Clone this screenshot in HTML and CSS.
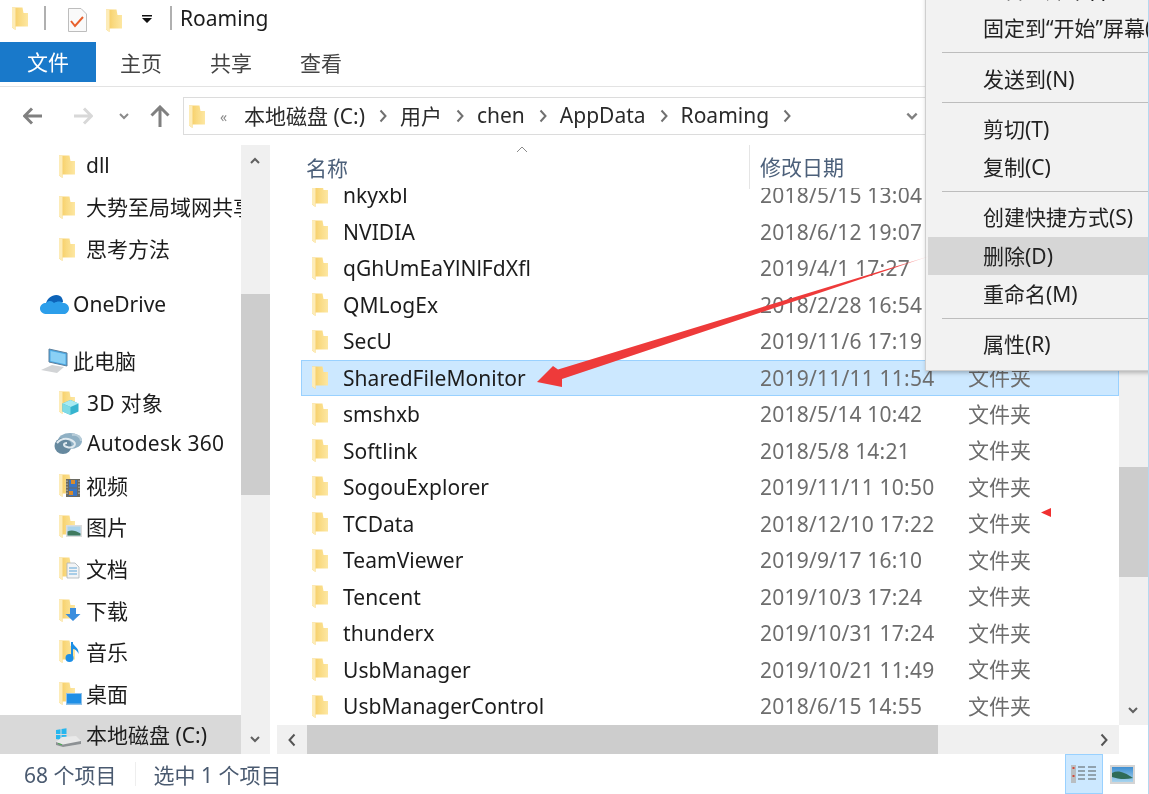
FILE: index.html
```html
<!DOCTYPE html>
<html lang="zh-CN">
<head>
<meta charset="utf-8">
<title>Roaming</title>
<link rel="stylesheet" href="styles.css">
</head>
<body>
<svg class="defs" aria-hidden="true">
  <defs>
    <linearGradient id="fg" x1="0" x2="1" y1="0" y2="0">
      <stop offset="0" stop-color="#f5c95c"/><stop offset=".45" stop-color="#f9d97f"/><stop offset="1" stop-color="#fde7a2"/>
    </linearGradient>
    <linearGradient id="tail" gradientUnits="userSpaceOnUse" x1="930" y1="256" x2="895" y2="267">
      <stop offset="0" stop-color="#f56a6a" stop-opacity=".2"/><stop offset="1" stop-color="#ee3a3a"/>
    </linearGradient>
    <linearGradient id="pic" x1="0" x2="0" y1="0" y2="1">
      <stop offset="0" stop-color="#3f8fd2"/><stop offset="1" stop-color="#a8d4ee"/>
    </linearGradient>
    <symbol id="folder" viewBox="0 0 16 23">
      <path d="M0 .5H10.500L11.500 6H16V19.500H3.500V23L0 20.500Z" fill="url(#fg)"/>
      <path d="M0 .5H3.500V23L0 20.500Z" fill="#fdecb8"/>
    </symbol>
    <symbol id="chev" viewBox="0 0 12 12">
      <path d="M2 4l4 4 4-4" fill="none" stroke="currentColor" stroke-width="2"/>
    </symbol>
  </defs>
</svg>

<div class="window">
  <header class="titlebar">
    <svg class="folder"><use href="#folder"/></svg>
    <span class="tsep first"></span>
    <svg class="docicon" viewBox="0 0 19 24"><path d="M.5.5H13L18.5 6V23.5H.5Z" fill="#fafafa" stroke="#bdbdbd"/><path d="M3 13l4 5 8-9" fill="none" stroke="#e8602c" stroke-width="2"/></svg>
    <svg class="folder second"><use href="#folder"/></svg>
    <svg class="drop" viewBox="0 0 10 10"><path d="M0 1h10v1.500H0zM0 4h10L5 9z" fill="#111"/></svg>
    <span class="tsep last"></span>
    <span class="title">Roaming</span>
  </header>

  <nav class="tabs">
    <span class="tab file">文件</span>
    <span class="tab">主页</span>
    <span class="tab">共享</span>
    <span class="tab">查看</span>
  </nav>

  <div class="addressrow">
    <svg class="navbtn back" viewBox="0 0 20 18"><path d="M1 9h18M9 1.500L1.500 9 9 16.500" fill="none" stroke="currentColor" stroke-width="3"/></svg>
    <svg class="navbtn fwd" viewBox="0 0 20 18"><path d="M1 9h18M11 1.500L18.500 9 11 16.500" fill="none" stroke="currentColor" stroke-width="3"/></svg>
    <svg class="navbtn hist"><use href="#chev"/></svg>
    <svg class="navbtn up" viewBox="0 0 20 22"><path d="M10 22V2M1.500 10.500L10 2l8.500 8.500" fill="none" stroke="currentColor" stroke-width="3"/></svg>
    <div class="addressbox">
      <svg class="folder"><use href="#folder"/></svg>
      <span class="more">«</span>
      <span class="crumb">本地磁盘 (C:)</span><svg class="sepchev" viewBox="0 0 8 14"><path d="M1.500 1.500L6.500 7l-5 5.500" fill="none" stroke="currentColor" stroke-width="2"/></svg>
      <span class="crumb">用户</span><svg class="sepchev" viewBox="0 0 8 14"><path d="M1.500 1.500L6.500 7l-5 5.500" fill="none" stroke="currentColor" stroke-width="2"/></svg>
      <span class="crumb">chen</span><svg class="sepchev" viewBox="0 0 8 14"><path d="M1.500 1.500L6.500 7l-5 5.500" fill="none" stroke="currentColor" stroke-width="2"/></svg>
      <span class="crumb">AppData</span><svg class="sepchev" viewBox="0 0 8 14"><path d="M1.500 1.500L6.500 7l-5 5.500" fill="none" stroke="currentColor" stroke-width="2"/></svg>
      <span class="crumb">Roaming</span><svg class="sepchev" viewBox="0 0 8 14"><path d="M1.500 1.500L6.500 7l-5 5.500" fill="none" stroke="currentColor" stroke-width="2"/></svg>
      <svg class="boxdown"><use href="#chev"/></svg>
    </div>
  </div>

  <div class="body">
    <aside class="nav">
      <div class="navrow"><svg class="navicon" viewBox="0 0 33 24"><use href="#folder" x="5" y="1" width="16" height="23"/></svg><span>dll</span></div>
      <div class="navrow"><svg class="navicon" viewBox="0 0 33 24"><use href="#folder" x="5" y="1" width="16" height="23"/></svg><span>大势至局域网共享</span></div>
      <div class="navrow"><svg class="navicon" viewBox="0 0 33 24"><use href="#folder" x="5" y="1" width="16" height="23"/></svg><span>思考方法</span></div>

      <div class="navrow top section"><svg class="navicon" viewBox="0 0 33 24"><path d="M6 11C7 4 15 0 20 3c2 1 3 4 3 6L10 14Z" fill="#0d63b8"/><path d="M7 21C3 21 0 19 0 15.500 0 12 3 10 6 10c3-3 6-2 8 0 3-2 7-2 9 0 3 0 6 2 6 5.500S26 21 24 21Z" fill="#2c9eea"/></svg><span>OneDrive</span></div>
      <div class="navrow top section"><svg class="navicon" viewBox="0 0 33 24"><path d="M9 0l18 4v13L9 13Z" fill="#4ba9e4" stroke="#5d7f9c"/><path d="M10.500 2l15 3.300v10L10.500 12Z" fill="#8ad0f5"/><path d="M1 21l11-5 12 2-7 6Z" fill="#d2d4d6"/></svg><span>此电脑</span></div>
      <div class="navrow latin"><svg class="navicon" viewBox="0 0 33 24"><use href="#folder" x="5" y="0" width="16" height="23"/><path d="M16.500 9l8 3.500v8l-8 3.500-8-3.500v-8Z" fill="#36b4cf"/><path d="M16.500 9l8 3.500-8 3.500-8-3.500Z" fill="#a9ebf2"/><path d="M8.500 12.500l8 3.500v8l-8-3.500Z" fill="#7fdbe6"/></svg><span>3D 对象</span></div>
      <div class="navrow latin"><svg class="navicon" viewBox="0 0 33 24"><ellipse cx="16" cy="9" rx="12" ry="8" fill="#8fb0c4"/><ellipse cx="9" cy="14" rx="8.500" ry="8" fill="#66899f"/><path d="M3 11c5-6 13-5 17-1 3 3-2 7-7 5-4-1-4-4 0-4" fill="none" stroke="#dfe9ef" stroke-width="2"/><path d="M18 3c5-1 9 2 9 6" fill="none" stroke="#b8cdd9" stroke-width="2"/></svg><span>Autodesk 360</span></div>
      <div class="navrow"><svg class="navicon" viewBox="0 0 33 24"><use href="#folder" x="5" y="0" width="16" height="23"/><rect x="12" y="5" width="14" height="18" fill="#6a6a62"/><rect x="15" y="6" width="8" height="7.500" fill="#3a76c4"/><rect x="15" y="14.500" width="8" height="7.500" fill="#3a76c4"/><path d="M17 6h4v4h-4zM15 17h4v4h-4z" fill="#d98b2c"/><path d="M13 6.500v15M25 6.500v15" stroke="#c8c8c0" stroke-dasharray="1.500 1.500"/></svg><span>视频</span></div>
      <div class="navrow"><svg class="navicon" viewBox="0 0 33 24"><use href="#folder" x="5" y="0" width="16" height="23"/><rect x="12" y="10" width="16" height="12" fill="#dcdcdc"/><rect x="13.500" y="11.500" width="13" height="9" fill="#a8d3ec"/><path d="M13.500 20.500v-4c4-2 8-1 13 2v2Z" fill="#3f7a5f"/></svg><span>图片</span></div>
      <div class="navrow"><svg class="navicon" viewBox="0 0 33 24"><use href="#folder" x="5" y="0" width="16" height="23"/><path d="M13 6h8l4 4v11H13Z" fill="#f2f4f6" stroke="#aab2b8" stroke-width=".8"/><path d="M15 11h8M15 14h8M15 17h8" stroke="#5ea6d8" stroke-width="1.200"/></svg><span>文档</span></div>
      <div class="navrow"><svg class="navicon" viewBox="0 0 33 24"><use href="#folder" x="5" y="0" width="16" height="23"/><path d="M16 9h6v6h4.500l-7.500 7-7.500-7H16Z" fill="#3b8ede"/></svg><span>下载</span></div>
      <div class="navrow"><svg class="navicon" viewBox="0 0 33 24"><use href="#folder" x="5" y="0" width="16" height="23"/><path d="M18 2v15" stroke="#1d8fe6" stroke-width="2"/><ellipse cx="15.500" cy="18" rx="4" ry="4" fill="#1d8fe6"/><path d="M18.500 2c0 4 7 5 6 12-1-3-3-5-6-5Z" fill="#1d8fe6"/></svg><span>音乐</span></div>
      <div class="navrow"><svg class="navicon" viewBox="0 0 33 24"><use href="#folder" x="5" y="0" width="16" height="23"/><rect x="12" y="11" width="16" height="12" fill="#8fc0e8"/><rect x="13" y="12" width="14" height="9.500" fill="#1f8fe6"/></svg><span>桌面</span></div>
      <div class="navrow active"><svg class="navicon" viewBox="0 0 33 24"><path d="M2 7l4.500-.8V11H2ZM7.500 6l5-.8V11h-5ZM2 12h4.500v4.800L2 16ZM7.500 12h5v5.800l-5-.8Z" fill="#27b6ee"/><path d="M2 19l6-5 14-1 5 5v3L9 24 2 22Z" fill="#e9e9e9"/><path d="M2 19l7 2.500 18-3.500v3L9 24 2 22Z" fill="#8d9194"/><path d="M4 20.500l4 1.300" stroke="#48b050" stroke-width="1"/></svg><span>本地磁盘 (C:)</span></div>
    </aside>

    <div class="vbar navbar">
      <svg class="barbtn"><use href="#chev" transform="rotate(180 6 6)"/></svg>
      <div class="thumb navthumb"></div>
      <svg class="barbtn end"><use href="#chev"/></svg>
    </div>

    <main class="main">
      <div class="mainrow">
        <div class="listpane">
          <div class="colhead">
            <span class="col name">名称</span>
            <svg class="sortup" viewBox="0 0 12 7"><path d="M1 6l5-5 5 5" fill="none" stroke="#8a8a8a" stroke-width="1"/></svg>
            <span class="col date">修改日期</span>
          </div>
          <div class="rows">
            <div class="rowsinner">
              <div class="row"><svg class="folder"><use href="#folder"/></svg><span class="fname">nkyxbl</span><span class="fdate">2018/5/15 13:04</span><span class="ftype">文件夹</span></div>
              <div class="row"><svg class="folder"><use href="#folder"/></svg><span class="fname">NVIDIA</span><span class="fdate">2018/6/12 19:07</span><span class="ftype">文件夹</span></div>
              <div class="row"><svg class="folder"><use href="#folder"/></svg><span class="fname">qGhUmEaYlNlFdXfl</span><span class="fdate">2019/4/1 17:27</span><span class="ftype">文件夹</span></div>
              <div class="row"><svg class="folder"><use href="#folder"/></svg><span class="fname">QMLogEx</span><span class="fdate">2018/2/28 16:54</span><span class="ftype">文件夹</span></div>
              <div class="row"><svg class="folder"><use href="#folder"/></svg><span class="fname">SecU</span><span class="fdate">2019/11/6 17:19</span><span class="ftype">文件夹</span></div>
              <div class="row selected"><svg class="folder"><use href="#folder"/></svg><span class="fname">SharedFileMonitor</span><span class="fdate">2019/11/11 11:54</span><span class="ftype">文件夹</span></div>
              <div class="row"><svg class="folder"><use href="#folder"/></svg><span class="fname">smshxb</span><span class="fdate">2018/5/14 10:42</span><span class="ftype">文件夹</span></div>
              <div class="row"><svg class="folder"><use href="#folder"/></svg><span class="fname">Softlink</span><span class="fdate">2018/5/8 14:21</span><span class="ftype">文件夹</span></div>
              <div class="row"><svg class="folder"><use href="#folder"/></svg><span class="fname">SogouExplorer</span><span class="fdate">2019/11/11 10:50</span><span class="ftype">文件夹</span></div>
              <div class="row"><svg class="folder"><use href="#folder"/></svg><span class="fname">TCData</span><span class="fdate">2018/12/10 17:22</span><span class="ftype">文件夹</span></div>
              <div class="row"><svg class="folder"><use href="#folder"/></svg><span class="fname">TeamViewer</span><span class="fdate">2019/9/17 16:10</span><span class="ftype">文件夹</span></div>
              <div class="row"><svg class="folder"><use href="#folder"/></svg><span class="fname">Tencent</span><span class="fdate">2019/10/3 17:24</span><span class="ftype">文件夹</span></div>
              <div class="row"><svg class="folder"><use href="#folder"/></svg><span class="fname">thunderx</span><span class="fdate">2019/10/31 17:24</span><span class="ftype">文件夹</span></div>
              <div class="row"><svg class="folder"><use href="#folder"/></svg><span class="fname">UsbManager</span><span class="fdate">2019/10/21 11:49</span><span class="ftype">文件夹</span></div>
              <div class="row"><svg class="folder"><use href="#folder"/></svg><span class="fname">UsbManagerControl</span><span class="fdate">2018/6/15 14:55</span><span class="ftype">文件夹</span></div>
            </div>
          </div>
        </div>
        <div class="vbar listbar">
          <div class="thumb listthumb"></div>
          <svg class="barbtn end"><use href="#chev"/></svg>
        </div>
      </div>
      <div class="hbar">
        <svg class="hbtn" viewBox="0 0 8 14"><path d="M6.500 1.500L1.500 7l5 5.500" fill="none" stroke="currentColor" stroke-width="2"/></svg>
        <div class="hthumb"></div>
        <svg class="hbtn" viewBox="0 0 8 14"><path d="M1.500 1.500L6.500 7l-5 5.500" fill="none" stroke="currentColor" stroke-width="2"/></svg>
      </div>
    </main>
  </div>

  <footer class="status">
    <span class="count">68 个项目</span>
    <span class="statsep"></span>
    <span>选中 1 个项目</span>
    <div class="views">
      <span class="viewbtn on">
        <svg class="detailicon" viewBox="0 0 26 18"><rect x="0" y="0" width="5" height="18" fill="#b9bec2"/><path d="M1.500 2h2v2h-2zM1.500 10h2v2h-2z" fill="#d24a3a"/><path d="M7 2h7M17 2h8M7 6h7M17 6h8M7 10h7M17 10h8M7 14h7M17 14h8" stroke="#7d8a94" stroke-width="1.500"/></svg>
      </span>
      <svg class="thumbicon" viewBox="0 0 25 19"><rect width="25" height="19" fill="#d4d4d4"/><rect x="2" y="2" width="21" height="15" fill="url(#pic)"/><path d="M2 12V8c6-3 12-1 21 5-8 2-15 1-21-1Z" fill="#2f6b58"/></svg>
    </div>
  </footer>

  <div class="menu">
    <div class="mitem">包含到库中(I)</div>
    <div class="mitem">固定到“开始”屏幕(P)</div>
    <div class="msep"></div>
    <div class="mitem">发送到(N)</div>
    <div class="msep"></div>
    <div class="mitem">剪切(T)</div>
    <div class="mitem">复制(C)</div>
    <div class="msep wide"></div>
    <div class="mitem">创建快捷方式(S)</div>
    <div class="mitem hot">删除(D)</div>
    <div class="mitem">重命名(M)</div>
    <div class="msep wide"></div>
    <div class="mitem">属性(R)</div>
  </div>

  <svg class="annot" viewBox="0 0 1149 794">
    <path d="M930 256L558 369.500 553 366 537 382 562 387 562 379Z" fill="url(#tail)"/>
    <path d="M1041 512.500L1051 508V517Z" fill="#f03030"/>
  </svg>
</div>
</body>
</html>
```
FILE: styles.css
```css
* { box-sizing: border-box; }
html, body { margin: 0; padding: 0; background: #fff; }
body { font-family: "Noto Sans", "Noto Sans CJK SC", sans-serif; font-size: 21px; color: #1c1c1c; }
.defs { position: absolute; width: 0; height: 0; }

.window {
  position: relative; width: 1149px; height: 794px; overflow: hidden;
  display: flex; flex-direction: column; background: #fff;
  border-right: 1px solid #b5d8ef; filter: blur(.45px);
}
svg { display: block; flex: none; }
.folder { width: 16px; height: 23px; }

.titlebar { height: 42px; display: flex; align-items: center; padding-left: 12px; flex: none; padding-bottom: 6px; }
.tsep { width: 2px; height: 24px; background: #b0b0b0; }
.tsep.first { margin-left: 16px; }
.docicon { width: 19px; height: 24px; margin-left: 22px; margin-top: 4px; }
.folder.second { margin-left: 19px; margin-top: 4px; }
.drop { width: 10px; height: 10px; margin-left: 20px; margin-top: 2px; }
.tsep.last { margin-left: 18px; }
.title { margin-left: 8px; line-height: 24px; }

.tabs { height: 45px; flex: none; display: flex; align-items: flex-start; border-bottom: 1px solid #e3e3e3; color: #444; }
.tab { padding: 0 24px; height: 40px; line-height: 43px; }
.tab.file { width: 96px; padding: 0 0 0 27px; background: #1979ca; color: #fff; line-height: 40px; }

.addressrow { height: 58px; flex: none; display: flex; align-items: center; }
.navbtn { color: #808080; }
.back { width: 20px; height: 18px; margin-left: 23px; }
.fwd { width: 20px; height: 18px; margin-left: 30px; color: #d8d8d8; }
.hist { width: 12px; height: 12px; margin-left: 25px; color: #8a8a8a; }
.up { width: 20px; height: 22px; margin-left: 20px; }
.addressbox {
  margin-left: 13px; flex: 1; height: 38px; display: flex; align-items: center;
  border: 1px solid #dcdcdc; border-right: 0; padding-left: 5px;
}
.more { color: #8a8a8a; font-size: 14px; margin-left: 15px; width: 24px; }
.crumb { color: #2a2a2a; white-space: nowrap; padding-bottom: 2px; }
.sepchev { width: 8px; height: 14px; margin: 0 13px 0 14px; color: #707070; }
.boxdown { width: 14px; height: 14px; margin-left: auto; margin-right: 229px; color: #808080; }

.body { height: 609px; flex: none; display: flex; }
.nav { width: 241px; flex: none; overflow: hidden; }
.navrow { height: 41.6px; display: flex; align-items: center; padding-left: 54px; white-space: nowrap; }
.navrow span { margin-left: -1px; padding-bottom: 2px; }
.navrow.top { padding-left: 40px; }
.navrow.top span { margin-left: 0; }
.navrow.latin span { margin-left: 0; letter-spacing: .25px; }
.navrow.section { margin-top: 14.4px; }
.navrow.active { background: #d9d9d9; }
.navicon { width: 33px; height: 24px; overflow: visible; }

.vbar { width: 29px; flex: none; background: #f0f0f0; display: flex; flex-direction: column; color: #606060; }
.barbtn { width: 12px; height: 12px; margin: 10px 0 0 8px; }
.barbtn.end { margin: auto 0 9px 8px; }
.thumb { background: #cdcdcd; width: 100%; }
.navthumb { height: 201px; margin-top: 127px; }
.listbar { height: 100%; }
.listthumb { height: 110px; margin-top: 322px; }

.main { margin-left: 7px; flex: 1; min-width: 0; display: flex; flex-direction: column; }
.mainrow { flex: 1; min-height: 0; display: flex; }
.listpane { flex: 1; min-width: 0; display: flex; flex-direction: column; }
.colhead { position: relative; height: 43px; flex: none; display: flex; align-items: center; color: #4c607a; }
.col.name { margin-left: 29px; width: 443px; }
.col.date { padding-left: 10px; height: 44px; line-height: 44px; border-left: 1px solid #e5e5e5; }
.sortup { position: absolute; left: 239px; top: 1px; width: 12px; height: 7px; }
.rows { flex: 1; min-height: 0; overflow: hidden; padding-left: 24px; }
.rowsinner { margin-top: -11px; }
.row { height: 36.5px; display: flex; align-items: center; padding-left: 11px; white-space: nowrap; }
.row.selected { background: #cce8ff; box-shadow: inset 0 0 0 1px #99d1ff; }
.fname { margin-left: 15px; width: 417px; color: #1c1c1c; letter-spacing: .05px; }
.fdate { width: 208px; color: #6d6d6d; letter-spacing: .22px; }
.ftype { color: #6d6d6d; padding-bottom: 3px; }

.hbar { height: 29px; flex: none; margin-right: 29px; background: #f0f0f0; display: flex; align-items: center; color: #555; }
.hbtn { width: 8px; height: 14px; margin: 0 11px; }
.hthumb { width: 631px; height: 100%; background: #cdcdcd; margin-left: 0; margin-right: auto; }

.status { height: 40px; flex: none; display: flex; align-items: center; padding-left: 24px; color: #4a5a70; }
.statsep { width: 1px; height: 24px; background: #eeeeee; margin: 0 17px 0 19px; }
.views { margin-left: auto; margin-right: 13px; display: flex; align-items: center; height: 100%; gap: 7px; }
.viewbtn { width: 38px; height: 100%; background: #cce8ff; border: 1px solid #99d1ff; display: flex; align-items: center; justify-content: center; }
.detailicon { width: 26px; height: 18px; }
.thumbicon { width: 25px; height: 19px; }

.menu {
  position: absolute; left: 925px; top: -29px; width: 240px; padding-bottom: 6px;
  background: #f2f2f2; border: 1px solid #cfcfcf; border-top: 0;
  box-shadow: 1px 2px 4px rgba(0,0,0,.25); padding-left: 2px; color: #222;
}
.mitem { height: 38.300px; line-height: 39px; padding-left: 55px; white-space: nowrap; }
.mitem.hot { background: #d6d6d6; }
.msep { height: 1px; margin: 4px 0 7px 14px; background: #bdbdbd; }
.msep.wide { margin-top: 5px; margin-bottom: 6px; }

.annot { position: absolute; left: 0; top: 0; width: 1149px; height: 794px; pointer-events: none; }
```
